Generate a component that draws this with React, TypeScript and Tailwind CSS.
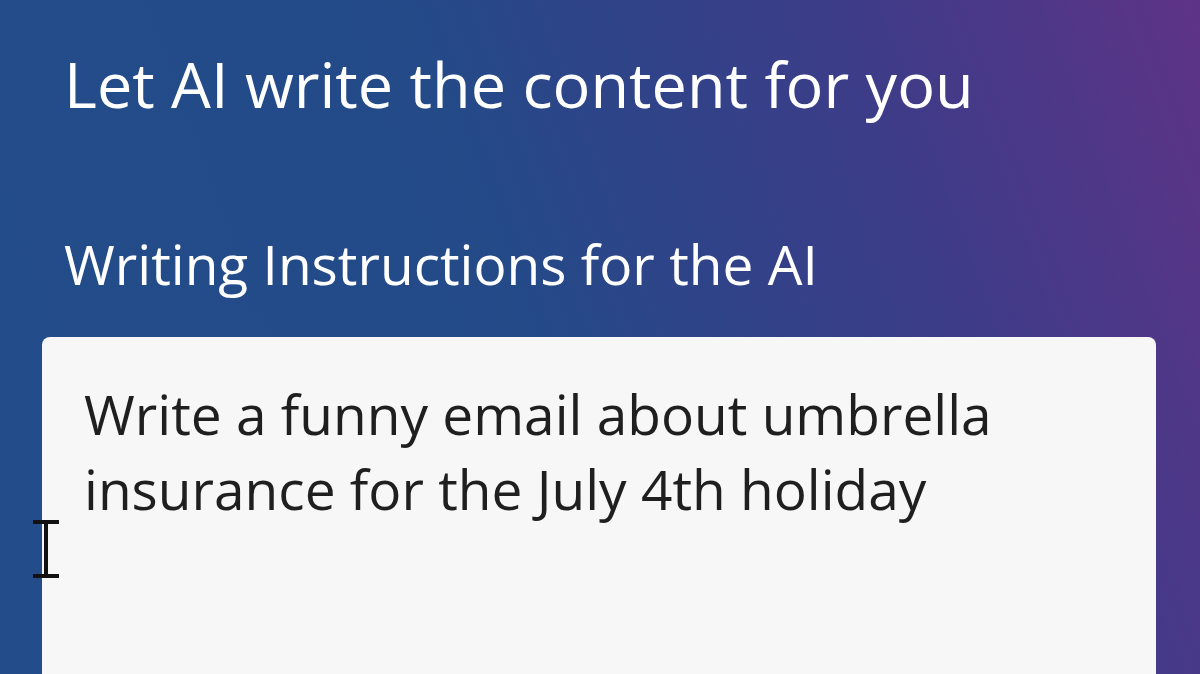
export default function App() {
  return (
    <div
      className="relative h-[674px] w-[1200px] overflow-hidden bg-[linear-gradient(70deg,#224d8a_0%,#244a88_45%,#3d3c88_75%,#5e3387_100%)]"
      style={{ fontFamily: '"Open Sans", "Noto Sans", sans-serif' }}
    >
      <div className="flex flex-col pl-[42px] pr-[44px] pt-[42px]">
        <h1 className="pl-[22px] text-[63px] font-normal leading-[84px] text-white">
          Let AI write the content for you
        </h1>

        <label className="mt-[102px] pl-[22px] text-[55px] font-normal leading-[72px] text-white">
          Writing Instructions for the AI
        </label>

        <div className="mt-[37px] h-[400px] rounded-[8px] bg-[#f7f7f7] px-[42px] pt-[39px]">
          <p className="text-[55px] leading-[75px] text-[#1f1f1f]">
            Write a funny email about umbrella insurance for the July 4th holiday
          </p>
        </div>
      </div>

      {/* text cursor over the field edge */}
      <svg
        className="absolute left-[30px] top-[519px]"
        width="32"
        height="60"
        viewBox="0 0 32 60"
      >
        <path
          d="M3 3h11M18 3h11M16 4v52M3 57h11M18 57h11M14 3h4M14 57h4"
          stroke="#111"
          strokeWidth="4"
          fill="none"
        />
      </svg>
    </div>
  );
}
